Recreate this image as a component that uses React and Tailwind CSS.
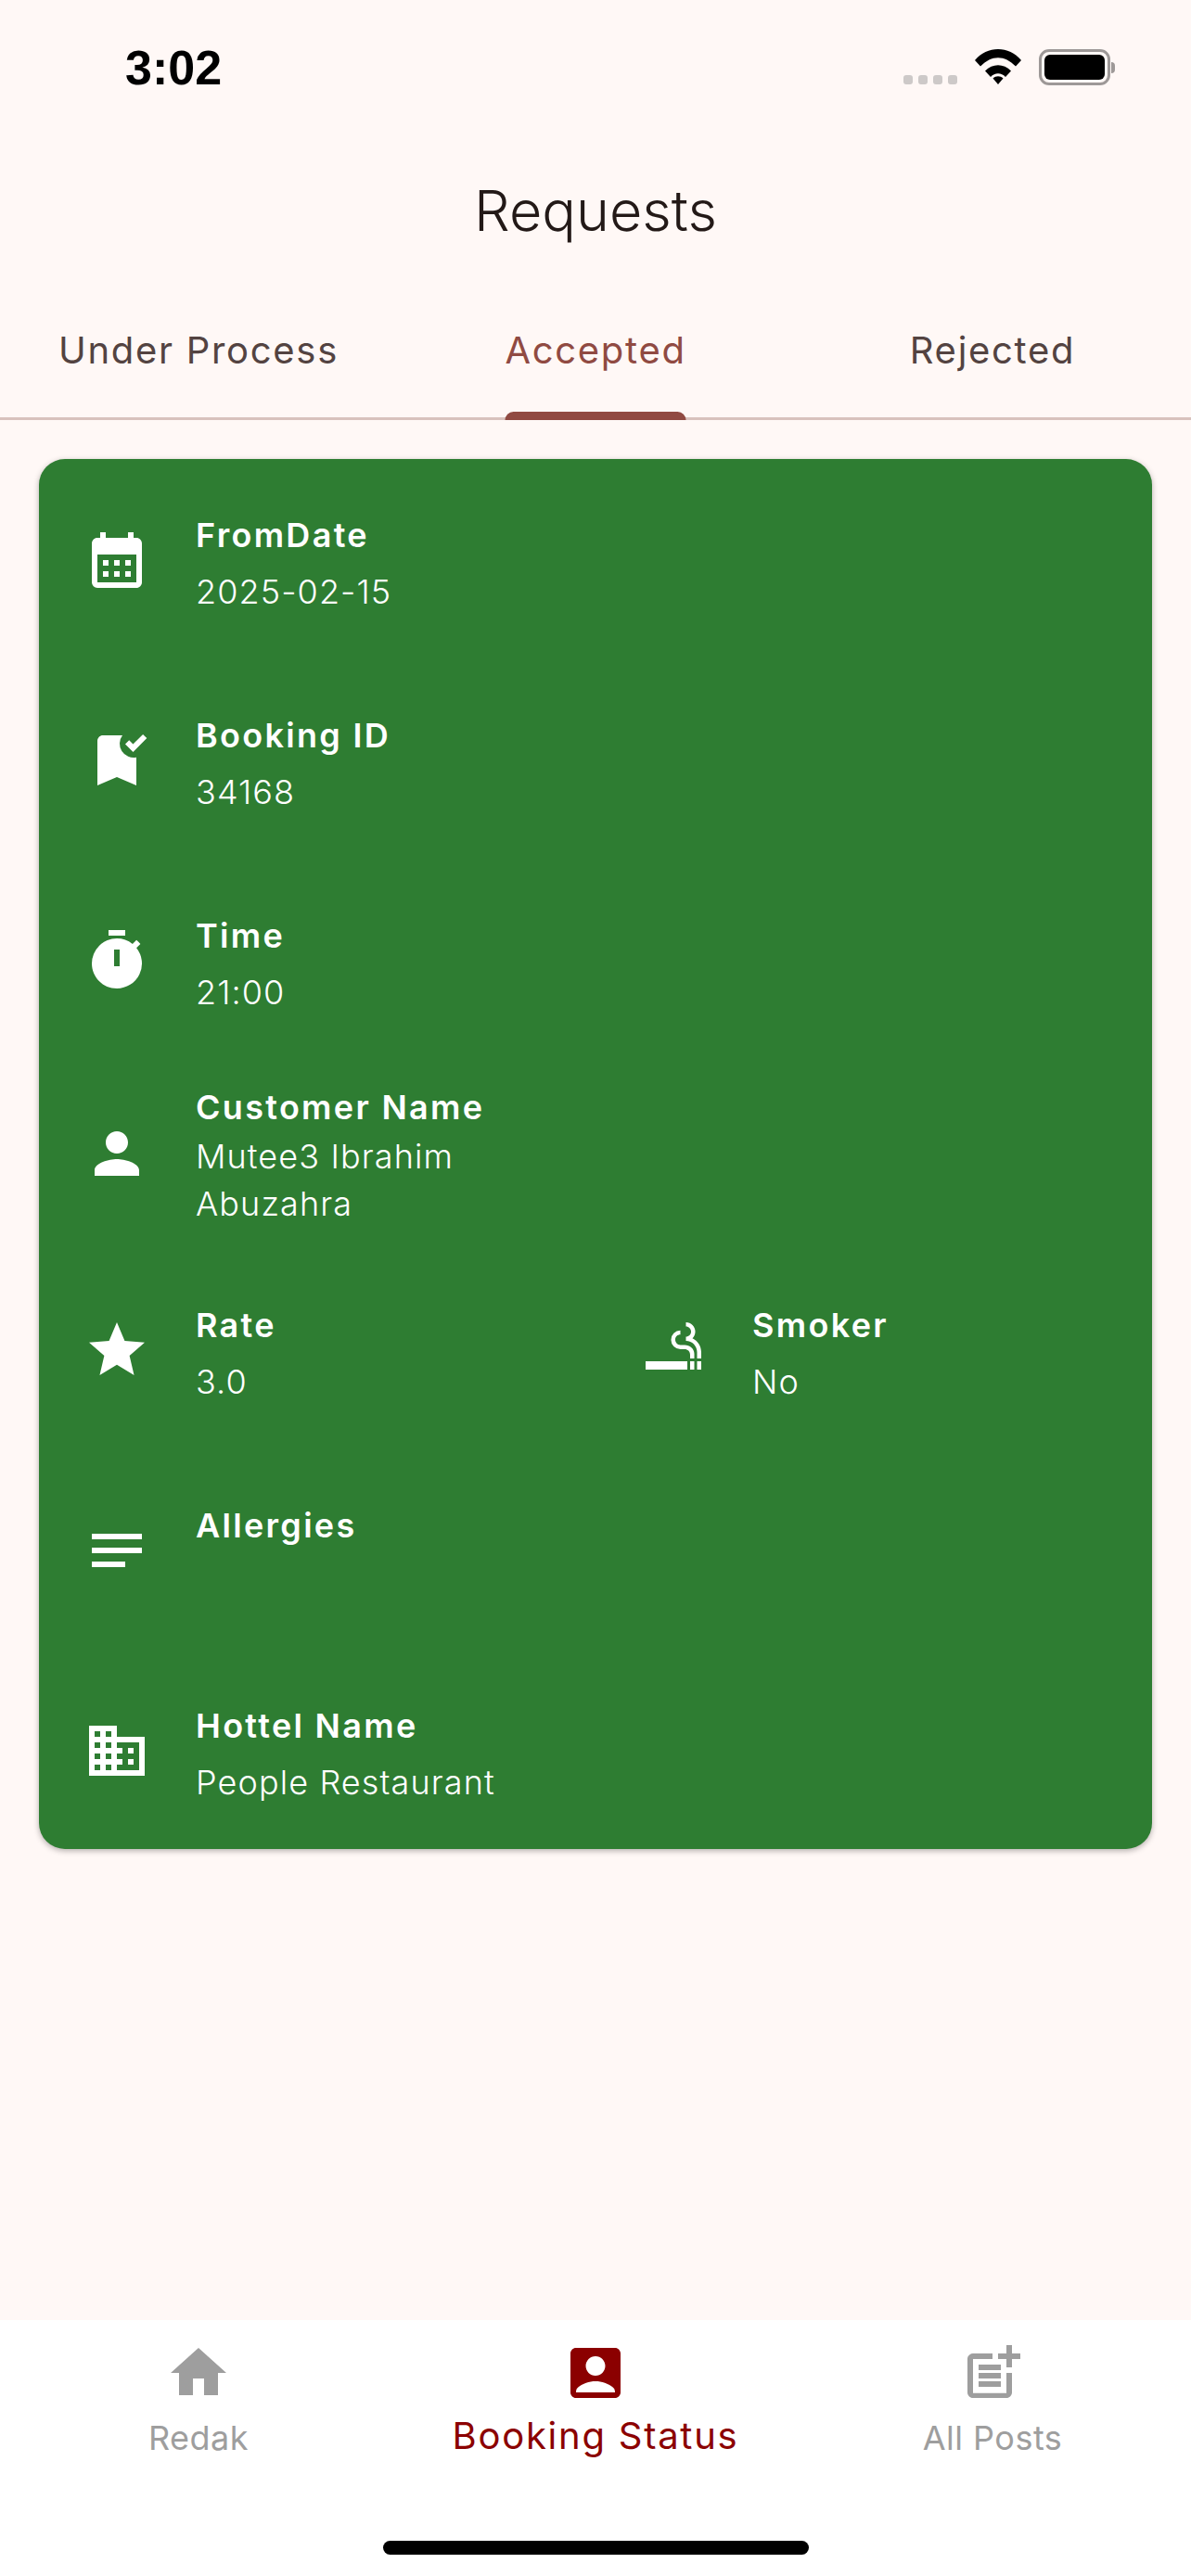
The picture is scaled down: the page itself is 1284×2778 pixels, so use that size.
import {
  MdCalendarMonth,
  MdBookmarkAdded,
  MdTimer,
  MdPerson,
  MdStar,
  MdOutlineSmokingRooms,
  MdNotes,
  MdDomain,
  MdHome,
  MdAccountBox,
  MdOutlinePostAdd
} from "react-icons/md";

const FONT = "font-['Inter','Liberation_Sans',sans-serif]";

function StatusBar() {
  return (
    <div className="flex h-[100px] items-start justify-between pl-[135px] pr-[82px] pt-[45px]">
      <span className="font-['Liberation_Sans',sans-serif] text-[52px] font-bold leading-[56px] text-black">3:02</span>
      <div className="flex items-start gap-[19px] pt-[8px]">
        <div className="mt-[28px] flex gap-[6px]">
          <span className="h-[10px] w-[10px] rounded-[3px] bg-[#cdc9c8]" />
          <span className="h-[10px] w-[10px] rounded-[3px] bg-[#cdc9c8]" />
          <span className="h-[10px] w-[10px] rounded-[3px] bg-[#cdc9c8]" />
          <span className="h-[10px] w-[10px] rounded-[3px] bg-[#cdc9c8]" />
        </div>
        <svg width="50" height="38" viewBox="0 0 50 38">
          <path d="M0 12C13-4 37-4 50 12l-6 6.500C32 6 18 6 6 18.500z" />
          <path d="M11 23.500c8-8.500 20-8.500 28 0l-6 6.500c-4.500-5-11.500-5-16 0z" />
          <path d="M19.500 31.500c3-3 8-3 11 0L25 38z" />
        </svg>
        <div className="flex items-center">
          <div className="flex h-[39px] w-[77px] rounded-[11px] border-[3px] border-[#9d9897] p-[3px]">
            <div className="flex-1 rounded-[6px] bg-black" />
          </div>
          <div className="ml-[1px] h-[12px] w-[4px] rounded-r-[4px] bg-[#9d9897]" />
        </div>
      </div>
    </div>
  );
}

function Tabs() {
  const tabs = ["Under Process", "Accepted", "Rejected"];
  return (
    <div className="flex h-[133px] border-b-[3px] border-[#d8c2bd]">
      {tabs.map((tab, index) => (
        <div key={tab} className="relative flex flex-1 items-start justify-center pt-[34px]">
          <span className={`text-[40px] leading-[48px] tracking-[1.7px] ${index === 1 ? "text-[#904a42]" : "text-[#534341]"}`}>
            {tab}
          </span>
          {index === 1 && (
            <div className="absolute bottom-[-3px] left-1/2 h-[9px] w-[195px] -translate-x-1/2 rounded-t-[9px] bg-[#904a42]" />
          )}
        </div>
      ))}
    </div>
  );
}

function InfoItem({ icon: Icon, label, lines, className = "" }) {
  const multiline = lines.length > 1;
  return (
    <div className={`flex items-center ${className}`}>
      <div className="-mt-[8px] flex w-[169px] shrink-0 justify-center pr-[1px]">
        <Icon size={72} color="#ffffff" />
      </div>
      <div className="min-w-0">
        <div className="text-[36px] font-semibold leading-[44px] tracking-[2.3px] text-white">{label}</div>
        {lines.map((line, index) => (
          <div
            key={line}
            className={`text-[36px] font-light tracking-[1.1px] text-white ${multiline ? "leading-[51px]" : "leading-[46px]"} ${index === 0 ? (multiline ? "mt-[6px]" : "mt-[16px]") : ""}`}
          >
            {line}
          </div>
        ))}
      </div>
    </div>
  );
}

function DetailsCard() {
  return (
    <div className="mx-[42px] mt-[42px] rounded-[28px] bg-[#2e7d32] pb-[49px] pt-[60px] shadow-[0_2px_6px_rgba(0,0,0,0.3)]">
      <InfoItem icon={MdCalendarMonth} label="FromDate" lines={["2025-02-15"]} className="h-[106px]" />
      <InfoItem icon={MdBookmarkAdded} label="Booking ID" lines={["34168"]} className="mt-[110px] h-[106px]" />
      <InfoItem icon={MdTimer} label="Time" lines={["21:00"]} className="mt-[110px] h-[106px]" />
      <InfoItem icon={MdPerson} label="Customer Name" lines={["Mutee3 Ibrahim", "Abuzahra"]} className="mt-[79px] h-[152px]" />
      <div className="mt-[83px] flex">
        <InfoItem icon={MdStar} label="Rate" lines={["3.0"]} className="h-[106px] w-[600px]" />
        <InfoItem icon={MdOutlineSmokingRooms} label="Smoker" lines={["No"]} className="h-[106px]" />
      </div>
      <InfoItem icon={MdNotes} label="Allergies" lines={["\u00a0"]} className="mt-[110px] h-[106px]" />
      <InfoItem icon={MdDomain} label="Hottel Name" lines={["People Restaurant"]} className="mt-[110px] h-[106px]" />
    </div>
  );
}

function BottomNav() {
  return (
    <div className="mt-auto h-[276px] bg-white">
      <div className="flex pt-[21px]">
        <div className="flex flex-1 flex-col items-center">
          <MdHome size={72} color="#9e9e9e" />
          <span className="mt-[12px] text-[36px] leading-[44px] tracking-[0.5px] text-[#9e9e9e]">Redak</span>
        </div>
        <div className="flex flex-1 flex-col items-center">
          <MdAccountBox size={72} color="#8b0000" />
          <span className="mt-[8px] text-[40px] leading-[48px] tracking-[1.75px] text-[#8b0000]">Booking Status</span>
        </div>
        <div className="flex flex-1 flex-col items-center">
          <MdOutlinePostAdd size={72} color="#9e9e9e" />
          <span className="mt-[12px] text-[36px] leading-[44px] tracking-[0.5px] text-[#9e9e9e]">All Posts</span>
        </div>
      </div>
      <div className="mx-auto mt-[89px] h-[15px] w-[459px] rounded-full bg-black" />
    </div>
  );
}

export default function App() {
  return (
    <div className={`flex h-[2778px] w-[1284px] flex-col overflow-hidden bg-[#fff8f6] ${FONT}`}>
      <StatusBar />
      <div className="flex h-[220px] items-start justify-center pt-[91px]">
        <h1 className="text-[61px] font-light leading-[72px] text-[#231917]">Requests</h1>
      </div>
      <Tabs />
      <DetailsCard />
      <BottomNav />
    </div>
  );
}
